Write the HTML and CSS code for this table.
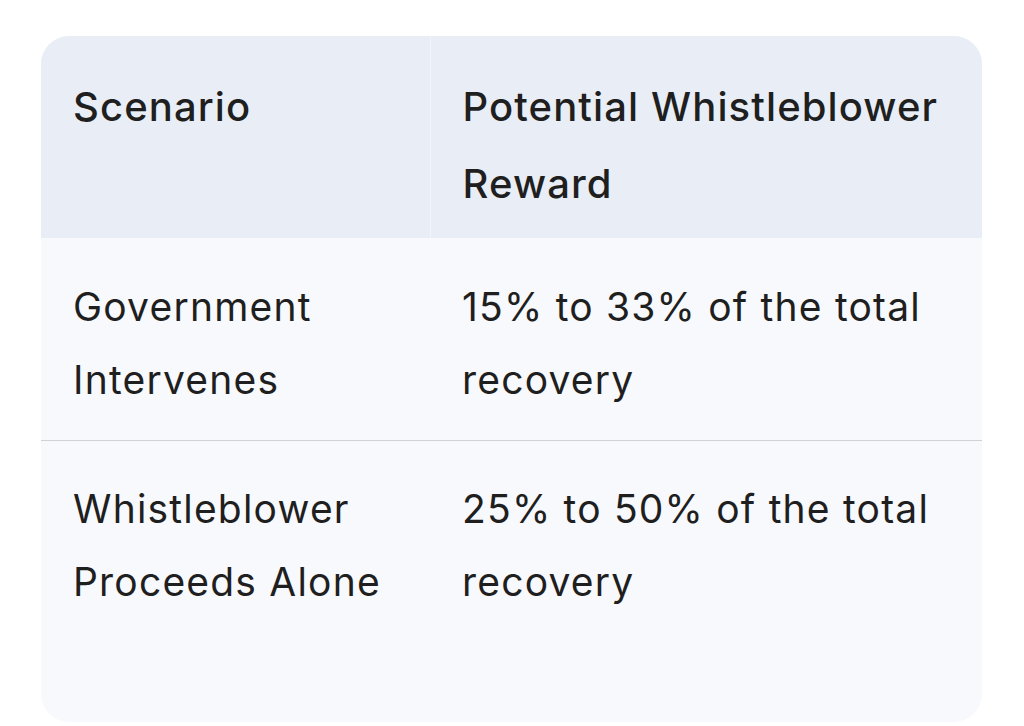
FILE: index.html
```html
<!DOCTYPE html>
<html lang="en">
<head>
<meta charset="utf-8">
<title>Whistleblower Reward</title>
<link rel="stylesheet" href="styles.css">
</head>
<body>
<div class="card">
  <table class="rewards">
    <thead>
      <tr>
        <th class="col-scenario">Scenario</th>
        <th class="col-reward">Potential Whistleblower Reward</th>
      </tr>
    </thead>
    <tbody>
      <tr class="row-first">
        <td>Government Intervenes</td>
        <td>15% to 33% of the total recovery</td>
      </tr>
      <tr class="row-last">
        <td>Whistleblower Proceeds Alone</td>
        <td>25% to 50% of the total recovery</td>
      </tr>
    </tbody>
  </table>
</div>
</body>
</html>
```

FILE: styles.css
```css
html, body {
  margin: 0;
  padding: 0;
  background: #ffffff;
}

body {
  font-family: Inter, Roboto, "Liberation Sans", sans-serif;
  color: #1f1f1f;
  padding: 36px 42px 0 41px;
}

.card {
  background: #f8f9fc;
  border-radius: 28px;
  overflow: hidden;
  height: 686px;
}

.rewards {
  width: 100%;
  border-collapse: collapse;
  table-layout: fixed;
}

.rewards th,
.rewards td {
  box-sizing: border-box;
}

.col-scenario {
  width: 389px;
}

.rewards th {
  background: #e9eef6;
  text-align: left;
  font-weight: 500;
  font-size: 40px;
  line-height: 77px;
  padding: 32px 16px 16px 32px;
  vertical-align: top;
  letter-spacing: 1.1px;
}

.rewards th + th {
  border-left: 1px solid #f1f4f9;
}

.rewards td {
  text-align: left;
  font-weight: 400;
  font-size: 39px;
  line-height: 73px;
  padding: 32px 16px 24px 32px;
  vertical-align: top;
  letter-spacing: 1.2px;
}

.row-first td {
  border-bottom: 1px solid #cfd2d6;
}

.row-last td {
  padding-top: 31px;
}
```
